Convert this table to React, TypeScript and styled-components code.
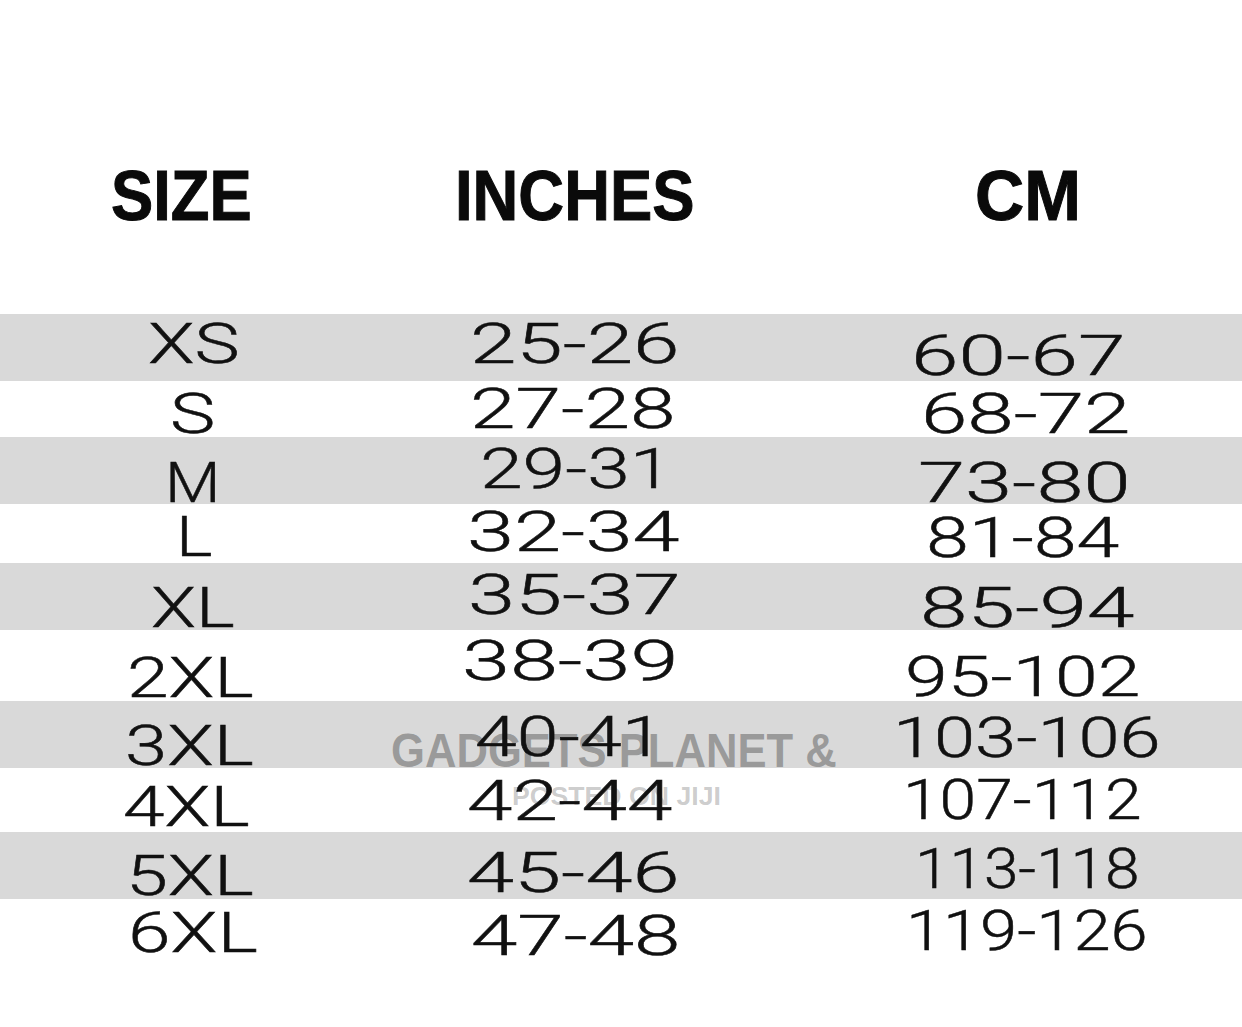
import React, { useLayoutEffect, useRef, useState } from "react";
import styled, { createGlobalStyle } from "styled-components";

const Global = createGlobalStyle`
  html, body { margin: 0; padding: 0; background: #ffffff; }
  body { width: 1242px; height: 1027px; overflow: hidden; font-family: Roboto, "Liberation Sans", Arial, sans-serif; }
`;

const COLS = [0, 420, 850];

const Page = styled.div`
  position: relative;
  width: 1242px;
  height: 1027px;
  background: #ffffff;
  overflow: hidden;
`;

const Header = styled.header`
  display: grid;
  grid-template-columns: 420px 430px 1fr;
  height: 314px;
  padding-top: 161px;
  box-sizing: border-box;
`;

const HeadCell = styled.div<{ $x: number }>`
  padding-left: ${(p) => p.$x}px;
  font-family: "Liberation Sans", Arial, sans-serif;
  font-weight: 700;
  font-size: 70px;
  line-height: 70px;
  color: #0a0a0a;
  -webkit-text-stroke: 1px #0a0a0a;
  white-space: nowrap;
`;

const Table = styled.div`
  display: flex;
  flex-direction: column;
`;

const Row = styled.div<{ $h: number; $shade: boolean }>`
  display: grid;
  grid-template-columns: 420px 430px 1fr;
  height: ${(p) => p.$h}px;
  background: ${(p) => (p.$shade ? "#d9d9d9" : "#ffffff")};
`;

const Cell = styled.div<{ $x: number; $y: number }>`
  padding-left: ${(p) => p.$x}px;
  padding-top: ${(p) => p.$y}px;
  height: 0;
  font-family: Roboto, "Liberation Sans", Arial, sans-serif;
  font-weight: 300;
  font-size: 56px;
  line-height: 56px;
  color: #111111;
  -webkit-text-stroke: 0.5px #111111;
  white-space: nowrap;
`;

const Stretch = styled.span`
  display: inline-block;
  position: relative;
  z-index: 2;
  transform-origin: 0 50%;
  white-space: nowrap;
`;

const Watermark = styled.div<{ $x: number; $y: number; $size: number; $alpha: number }>`
  position: absolute;
  left: ${(p) => p.$x}px;
  top: ${(p) => p.$y}px;
  z-index: 1;
  font-family: "Liberation Sans", Arial, sans-serif;
  font-weight: 700;
  font-size: ${(p) => p.$size}px;
  line-height: ${(p) => p.$size}px;
  color: rgba(100, 100, 100, ${(p) => p.$alpha});
  white-space: nowrap;
  pointer-events: none;
`;

const Fit: React.FC<{ w: number; children: string }> = ({ w, children }) => {
  const ref = useRef<HTMLSpanElement>(null);
  const [s, setS] = useState(1);
  useLayoutEffect(() => {
    const measure = () => {
      const el = ref.current;
      if (!el) return;
      const nat = el.offsetWidth;
      if (nat) setS(w / nat);
    };
    measure();
    if (document.fonts && document.fonts.ready) document.fonts.ready.then(measure);
  }, [w, children]);
  return (
    <Stretch ref={ref} style={{ transform: `scaleX(${s})` }}>
      {children}
    </Stretch>
  );
};

type Item = [string, number, number, number];
type RowData = { h: number; shade: boolean; cells: Item[] };

const rows: RowData[] = [
  { h: 67, shade: true, cells: [["XS", 150, 237, 343], ["25-26", 472, 677, 343], ["60-67", 913, 1123, 355]] },
  { h: 56, shade: false, cells: [["S", 172, 213, 413], ["27-28", 472, 673, 403], ["68-72", 923, 1128, 413]] },
  { h: 67, shade: true, cells: [["M", 167, 218, 482], ["29-31", 482, 670, 468], ["73-80", 920, 1128, 482]] },
  { h: 59, shade: false, cells: [["L", 178, 211, 536.5], ["32-34", 469, 677, 531], ["81-84", 928, 1117, 537]] },
  { h: 67, shade: true, cells: [["XL", 153, 233, 607], ["35-37", 470, 678, 594.5], ["85-94", 922, 1132, 607]] },
  { h: 71, shade: false, cells: [["2XL", 129, 252, 677], ["38-39", 464, 676, 660.5], ["95-102", 907, 1138, 676]] },
  { h: 67, shade: true, cells: [["3XL", 127, 252, 745.5], ["40-41", 477, 661, 736], ["103-106", 895, 1158, 737.5]] },
  { h: 64, shade: false, cells: [["4XL", 125, 248, 806.5], ["42-44", 469, 670, 800.5], ["107-112", 905, 1139, 799]] },
  { h: 67, shade: true, cells: [["5XL", 128, 252, 875], ["45-46", 469, 677, 872.5], ["113-118", 917, 1137, 868.5]] },
  { h: 128, shade: false, cells: [["6XL", 130, 256, 932], ["47-48", 473, 678, 935], ["119-126", 908, 1145, 930.5]] },
];

const headers: [string, number, number][] = [
  ["SIZE", 112, 250],
  ["INCHES", 456, 692],
  ["CM", 976, 1079],
];

const CAP_CENTER = 27.2;
const BEAR = 2;
const HEAD_BEAR = 1.5;

export default function App() {
  let top = 314;
  return (
    <>
      <Global />
      <Page>
        <Header>
          {headers.map(([t, l, r], i) => (
            <HeadCell key={t} $x={l - COLS[i] - HEAD_BEAR}>
              <Fit w={r - l + HEAD_BEAR * 2}>{t}</Fit>
            </HeadCell>
          ))}
        </Header>
        <Table>
          {rows.map((row, ri) => {
            const rowTop = top;
            top += row.h;
            return (
              <Row key={ri} $h={row.h} $shade={row.shade}>
                {row.cells.map(([t, l, r, yc], ci) => (
                  <Cell key={ci} $x={l - COLS[ci] - BEAR} $y={yc - rowTop - CAP_CENTER}>
                    <Fit w={r - l + BEAR * 2}>{t}</Fit>
                  </Cell>
                ))}
              </Row>
            );
          })}
        </Table>
        <Watermark $x={391} $y={727} $size={48} $alpha={0.55}>
          <Fit w={446}>GADGETS PLANET &amp;</Fit>
        </Watermark>
        <Watermark $x={512} $y={784} $size={25} $alpha={0.32}>
          <Fit w={209}>POSTED ON JIJI</Fit>
        </Watermark>
      </Page>
    </>
  );
}
